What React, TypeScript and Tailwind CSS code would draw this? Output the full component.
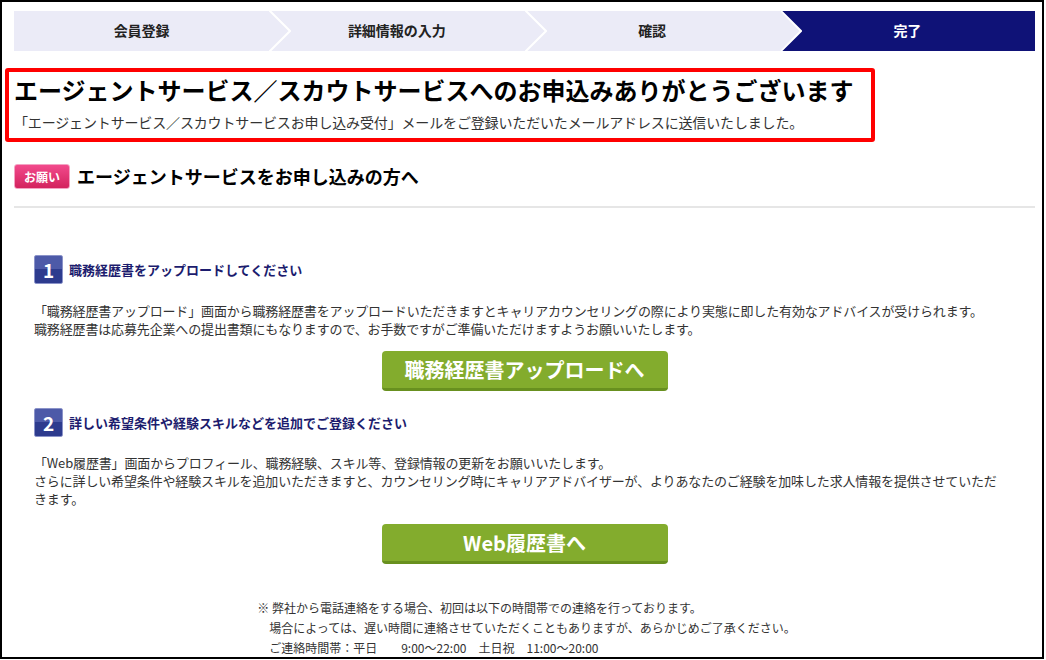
const STEPS = ['会員登録', '詳細情報の入力', '確認', '完了'];

function StepBar() {
  return (
    <div className="flex h-[40px] w-full">
      {STEPS.map((label, i) => {
        const last = i === STEPS.length - 1;
        return (
          <div
            key={label}
            className={
              last
                ? 'relative flex flex-1 items-center justify-center bg-[#0f1277] pb-[2px] text-[14px] font-bold text-white'
                : 'relative flex flex-1 items-center justify-center bg-[#ebebf7] pb-[2px] text-[14px] font-bold text-[#222]'
            }
          >
            {label}
            {!last && (
              <svg
                className="absolute top-0 right-[-22px] z-10"
                width="22"
                height="40"
                viewBox="0 0 22 40"
              >
                <polygon points="0,0 21,20 0,40" fill="#ebebf7" />
                <polyline points="0,-1 21,20 0,41" fill="none" stroke="#ffffff" strokeWidth="2" />
              </svg>
            )}
          </div>
        );
      })}
    </div>
  );
}

function NumberBox({ n }: { n: string }) {
  return (
    <div className="flex h-[29px] w-[29px] items-center justify-center rounded-[2px] border border-[#8b93c9] bg-[linear-gradient(#4d5aa8_0%,#4d5aa8_50%,#2d3b8e_50%,#2d3b8e_100%)] text-[19px] font-bold leading-none text-white">
      {n}
    </div>
  );
}

function GreenButton({ label }: { label: string }) {
  return (
    <div className="mx-auto flex h-[40px] w-[286px] items-center justify-center rounded-[4px] border-b-[3px] border-[#68901f] bg-[#83ac2d] text-[20px] font-bold text-white">
      {label}
    </div>
  );
}

export default function App() {
  return (
    <div className="h-[659px] w-[1044px] overflow-hidden border-2 border-black bg-white pt-[9px] pl-[12px] font-['Noto_Sans_CJK_JP','Noto_Sans',sans-serif] text-[#333]">
      <div className="w-[1021px]">
        <StepBar />

        {/* thanks box */}
        <div className="mt-[17px] -ml-[9px] w-[870px] rounded-[3px] border-4 border-[#ff0000] pt-[2px] pr-2 pb-[6px] pl-[5px]">
          <h1 className="text-[24px] leading-[32px] font-bold text-black">
            エージェントサービス／スカウトサービスへのお申込みありがとうございます
          </h1>
          <p className="mt-[6px] text-[14px] leading-[20px] tracking-[-0.15px] text-[#333]">
            「エージェントサービス／スカウトサービスお申し込み受付」メールをご登録いただいたメールアドレスに送信いたしました。
          </p>
        </div>

        {/* heading */}
        <div className="mt-[22px] flex items-center gap-[7px]">
          <span className="flex h-[25px] w-[56px] items-center justify-center rounded-[3px] border border-[#f4a3c3] bg-[linear-gradient(#f24a8c,#d3235e)] text-[12px] font-bold text-white">
            お願い
          </span>
          <h2 className="text-[18px] leading-[25px] font-bold text-black">エージェントサービスをお申し込みの方へ</h2>
        </div>
        <div className="mt-[17px] h-[2px] bg-[#e6e6e6]" />

        {/* step 1 */}
        <div className="px-[20px]">
          <div className="mt-[47px] flex items-center gap-[6px]">
            <NumberBox n="1" />
            <h3 className="text-[13px] font-bold text-[#1c1c6e]">職務経歴書をアップロードしてください</h3>
          </div>
          <p className="mt-[18px] text-[13px] leading-[18px] tracking-[-0.15px]">
            「職務経歴書アップロード」画面から職務経歴書をアップロードいただきますとキャリアカウンセリングの際により実態に即した有効なアドバイスが受けられます。
            <br />
            職務経歴書は応募先企業への提出書類にもなりますので、お手数ですがご準備いただけますようお願いいたします。
          </p>
          <div className="mt-[13px]">
            <GreenButton label="職務経歴書アップロードへ" />
          </div>

          {/* step 2 */}
          <div className="mt-[17px] flex items-center gap-[6px]">
            <NumberBox n="2" />
            <h3 className="text-[13px] font-bold text-[#1c1c6e]">詳しい希望条件や経験スキルなどを追加でご登録ください</h3>
          </div>
          <p className="mt-[17px] pr-[14px] text-[13px] leading-[18px] tracking-[-0.15px]">
            「Web履歴書」画面からプロフィール、職務経験、スキル等、登録情報の更新をお願いいたします。
            <br />
            さらに詳しい希望条件や経験スキルを追加いただきますと、カウンセリング時にキャリアアドバイザーが、よりあなたのご経験を加味した求人情報を提供させていただきます。
          </p>
          <div className="mt-[16px]">
            <GreenButton label="Web履歴書へ" />
          </div>

          {/* notes */}
          <div className="mt-[34px] flex justify-center">
            <div className="ml-[4px] text-[12px] leading-[20px]">
              <p>※ 弊社から電話連絡をする場合、初回は以下の時間帯での連絡を行っております。</p>
              <p className="pl-[12px]">場合によっては、遅い時間に連絡させていただくこともありますが、あらかじめご了承ください。</p>
              <p className="pl-[12px] whitespace-pre">ご連絡時間帯：平日　　9:00～22:00　土日祝　11:00～20:00</p>
            </div>
          </div>
        </div>
      </div>
    </div>
  );
}
